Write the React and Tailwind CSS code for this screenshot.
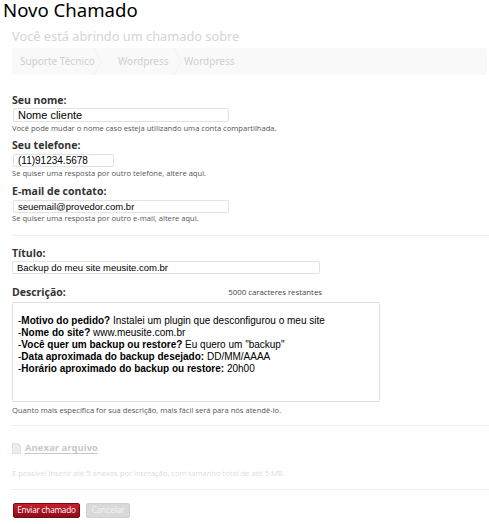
export default function App() {
  const Label = ({ children }) => (
    <div className="text-[10.5px] font-bold text-[#333] leading-[12px]">{children}</div>
  );
  const Help = ({ children, className = "" }) => (
    <div className={"text-[7.6px] text-[#555] leading-[9px] whitespace-nowrap " + className}>{children}</div>
  );
  const Chev = () => (
    <svg width="8" height="27" viewBox="0 0 8 27" className="shrink-0">
      <path d="M0 0 L7 13.5 L0 27" fill="none" stroke="#f1f1f1" strokeWidth="1" />
    </svg>
  );
  const inputText = "border border-[#e2e2e2] rounded-[2px] flex items-center text-black font-['Liberation_Sans',sans-serif] leading-none whitespace-nowrap";
  return (
    <div className="w-[489px] h-[524px] bg-white overflow-hidden font-['Open_Sans',sans-serif]">
      <h1 className="text-[18.6px] leading-[20px] text-black pl-[3px] font-['Noto_Sans',sans-serif] whitespace-nowrap">Novo Chamado</h1>
      <div className="pl-[12px] mt-[8px] text-[12.8px] leading-[16px] text-[#d4d4d4] font-['Noto_Sans',sans-serif] whitespace-nowrap">Você está abrindo um chamado sobre</div>
      <div className="ml-[12px] mr-[2px] mt-[4px] h-[27px] bg-[#f9f9f9] rounded-r-[3px] flex items-center text-[10px] text-[#d0d0d0] font-['Noto_Sans',sans-serif] whitespace-nowrap">
        <span className="w-[82px] pl-[8px]">Suporte Técnico</span>
        <Chev />
        <span className="w-[72px] pl-[16px]">Wordpress</span>
        <Chev />
        <span className="pl-[2px]">Wordpress</span>
      </div>

      <div className="pl-[12px] pt-[19px]">
        <Label>Seu nome:</Label>
        <div className={"mt-[2px] ml-[1px] w-[216px] h-[14px] pl-[4px] text-[11px] " + inputText}>Nome cliente</div>
        <Help className="mt-[2px]">Você pode mudar o nome caso esteja utilizando uma conta compartilhada.</Help>

        <div className="mt-[6px]"><Label>Seu telefone:</Label></div>
        <div className={"mt-[3px] ml-[1px] w-[101px] h-[13px] pl-[4px] text-[10px] " + inputText}>(11)91234.5678</div>
        <Help className="mt-[2px]">Se quiser uma resposta por outro telefone, altere aqui.</Help>

        <div className="mt-[7px]"><Label>E-mail de contato:</Label></div>
        <div className={"mt-[3px] ml-[1px] w-[216px] h-[13px] pl-[4px] text-[9.5px] " + inputText}>seuemail@provedor.com.br</div>
        <Help className="mt-[1px]">Se quiser uma resposta por outro e-mail, altere aqui.</Help>
      </div>

      <div className="ml-[12px] mt-[12px] border-t border-[#eeeeee]"></div>

      <div className="pl-[12px] pt-[11px]">
        <Label>Título:</Label>
        <div className={"mt-[2px] w-[308px] h-[13px] pl-[4px] text-[9.5px] " + inputText}>Backup do meu site meusite.com.br</div>

        <div className="mt-[12px] w-[310px] flex items-center justify-between">
          <Label>Descrição:</Label>
          <span className="text-[7.8px] leading-[12px] text-[#444]">5000 caracteres restantes</span>
        </div>
        <div className="mt-[4px] w-[368px] h-[100px] border border-[#e2e2e2] rounded-[2px] pl-[5px] pt-[12px] text-[10px] leading-[12px] text-black font-['Liberation_Sans',sans-serif] whitespace-nowrap">
          <div>-<b>Motivo do pedido?</b> Instalei um plugin que desconfigurou o meu site</div>
          <div>-<b>Nome do site?</b> www.meusite.com.br</div>
          <div>-<b>Você quer um backup ou restore?</b> Eu quero um "backup"</div>
          <div>-<b>Data aproximada do backup desejado:</b> DD/MM/AAAA</div>
          <div>-<b>Horário aproximado do backup ou restore:</b> 20h00</div>
        </div>
        <Help className="mt-[4px]">Quanto mais específica for sua descrição, mais fácil será para nós atendê-lo.</Help>
      </div>

      <div className="ml-[12px] mt-[10px] border-t border-[#eeeeee]"></div>

      <div className="pl-[12px] mt-[15px] h-[14px] flex items-center gap-[4px]">
        <svg width="9" height="11" viewBox="0 0 9 11">
          <path d="M0.5 0.5 H6 L8.5 3 V10.5 H0.5 Z" fill="#e9eef5" stroke="#d9e1ec" />
          <path d="M6 0.5 V3 H8.5" fill="none" stroke="#d9e1ec" />
        </svg>
        <span className="text-[9.5px] font-bold text-[#c8c8c8] underline underline-offset-2 whitespace-nowrap">Anexar arquivo</span>
      </div>
      <div className="pl-[12px] mt-[14px] text-[7.6px] leading-[9px] text-[#dddddd] whitespace-nowrap">É possível inserir até 5 anexos por interação, com tamanho total de até 5 MB.</div>

      <div className="ml-[12px] mt-[11px] border-t border-[#eeeeee]"></div>

      <div className="pl-[13px] mt-[13px] flex gap-[6px]">
        <div className="w-[67px] h-[15px] rounded-[2px] bg-gradient-to-b from-[#c41f2c] to-[#8e0d17] border border-[#7a0a12] text-white text-[8.2px] tracking-[-0.2px] flex items-center justify-center whitespace-nowrap">Enviar chamado</div>
        <div className="w-[44px] h-[15px] rounded-[2px] bg-[#d9d9d9] border border-[#d0d0d0] text-[#f4f4f4] text-[8.2px] flex items-center justify-center whitespace-nowrap">Cancelar</div>
      </div>
    </div>
  );
}
